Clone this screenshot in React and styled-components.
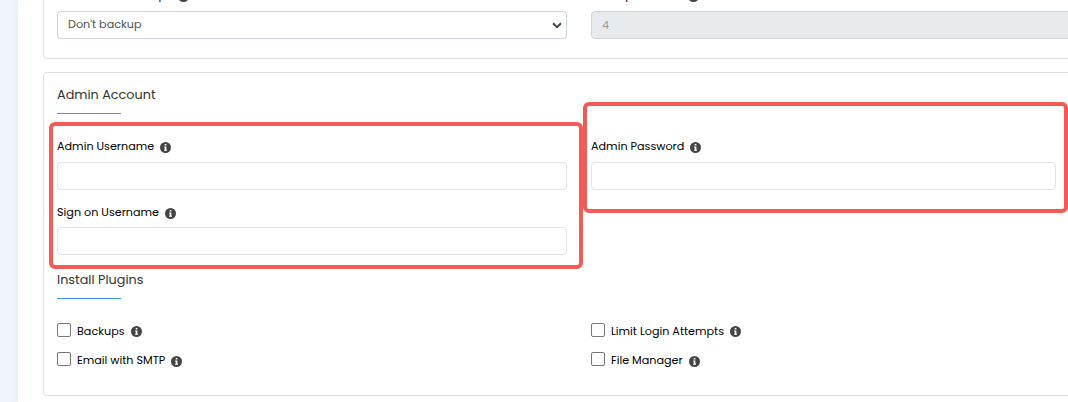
import React from "react";
import styled, { createGlobalStyle } from "styled-components";

const Global = createGlobalStyle`
  *{box-sizing:border-box}
  body{margin:0;background:#eff5fa;font-family:Poppins,Inter,"Liberation Sans",sans-serif;font-size:11.2px;color:#000;overflow:hidden}
`;
const Page = styled.main`
  position:relative;height:402px;margin-left:18px;padding-left:25px;background:#fff;
  box-shadow:0 0 5px rgba(90,110,130,.1);overflow:hidden;
`;
const Panel = styled.section`
  width:1040px;height:${p => p.$h}px;border:1px solid #dcdee0;border-radius:4px;padding:0 13px;
  margin-bottom:13px;
  ${p => p.$top && "border-top:0;border-radius:0 0 4px 4px;"}
`;
const Grid = styled.div`display:grid;grid-template-columns:510px 510px;column-gap:24px;`;
const Label = styled.label`
  display:flex;align-items:center;height:18px;line-height:18px;white-space:nowrap;
  margin-top:${p => p.$mt || 0}px;
`;
const Info = styled.svg`width:11px;height:11px;margin-left:6px;position:relative;top:${p => p.$drop ?? 1}px;flex:none;`;
const Input = styled.input`
  display:block;width:${p => p.$w || 510}px;height:28px;border:1px solid #e3e3e3;border-radius:4px;background:#fff;
  margin-top:${p => p.$mt}px;padding:0 10px;font:inherit;outline:none;
  &:disabled{background:#e8ebee;border-color:#ced4da;color:#999}
`;
const Select = styled.div`
  display:flex;align-items:center;justify-content:space-between;height:28px;border:1px solid #ced4da;
  margin-top:7px;border-radius:4px;padding:0 4px 2px 10px;color:#495057;
  svg{width:10px;height:7px;position:relative;top:1px}
`;
const Heading = styled.h2`
  margin:0;font-size:12.8px;font-weight:400;line-height:20px;color:#333;
  padding-top:${p => p.$pt}px;
  &::after{content:"";display:block;width:64px;height:1px;margin-top:8px;background:#3d94f6}
`;
const Check = styled.input`appearance:none;width:14px;height:14px;margin:0 6px 0 0;border:1px solid #767676;border-radius:2px;background:#fff;position:relative;top:-1px;`;
const Highlight = styled.div`
  position:absolute;border:4px solid #f25c57;border-radius:6px;pointer-events:none;
  left:${p => p.$x}px;top:${p => p.$y}px;width:${p => p.$w}px;height:${p => p.$h}px;
`;

const InfoIcon = ({ $drop }) => (
  <Info viewBox="0 0 11 11" $drop={$drop}>
    <circle cx="5.5" cy="5.5" r="5.5" fill="#444" />
    <path d="M4.7 1.9h1.7v1.5H4.7zM4.1 4.4h2.3v3.4H7v1H4v-1h.7V5.4h-.6z" fill="#fff" />
  </Info>
);
const Field = ({ text, mt, drop }) => (
  <Label $mt={mt}><span>{text}</span><InfoIcon $drop={drop} /></Label>
);
const Plugin = ({ text, mt, drop }) => (
  <Label $mt={mt}><Check type="checkbox" /><span>{text}</span><InfoIcon $drop={drop} /></Label>
);

export default function App() {
  return (
    <>
      <Global />
      <Page>
        <Panel $h={59} $top>
          <Grid>
            <div>
              <Field text="Automated backups" mt={-14} />
              <Select>
                <span>Don't backup</span>
                <svg viewBox="0 0 10 7"><path d="M1 1.3 5 5.2 9 1.3" fill="none" stroke="#3f464c" strokeWidth="2" /></svg>
              </Select>
            </div>
            <div>
              <Field text="Backup Rotation" mt={-14} />
              <Input $mt={7} disabled value="4" readOnly />
            </div>
          </Grid>
        </Panel>
        <Panel $h={324}>
          <Heading $pt={12}>Admin Account</Heading>
          <Grid>
            <div>
              <Field text="Admin Username" mt={23} />
              <Input $mt={7} />
              <Field text="Sign on Username" mt={13} />
              <Input $mt={6} />
            </div>
            <div>
              <Field text="Admin Password" mt={23} />
              <Input $mt={7} $w={465} />
            </div>
          </Grid>
          <Heading $pt={15}>Install Plugins</Heading>
          <Grid>
            <div>
              <Plugin text="Backups" mt={23} drop={0} />
              <Plugin text="Email with SMTP" mt={11} />
            </div>
            <div>
              <Plugin text="Limit Login Attempts" mt={23} drop={0} />
              <Plugin text="File Manager" mt={11} />
            </div>
          </Grid>
        </Panel>
        <Highlight $x={31} $y={122} $w={534} $h={147} />
        <Highlight $x={565} $y={102} $w={485} $h={111} />
      </Page>
    </>
  );
}
